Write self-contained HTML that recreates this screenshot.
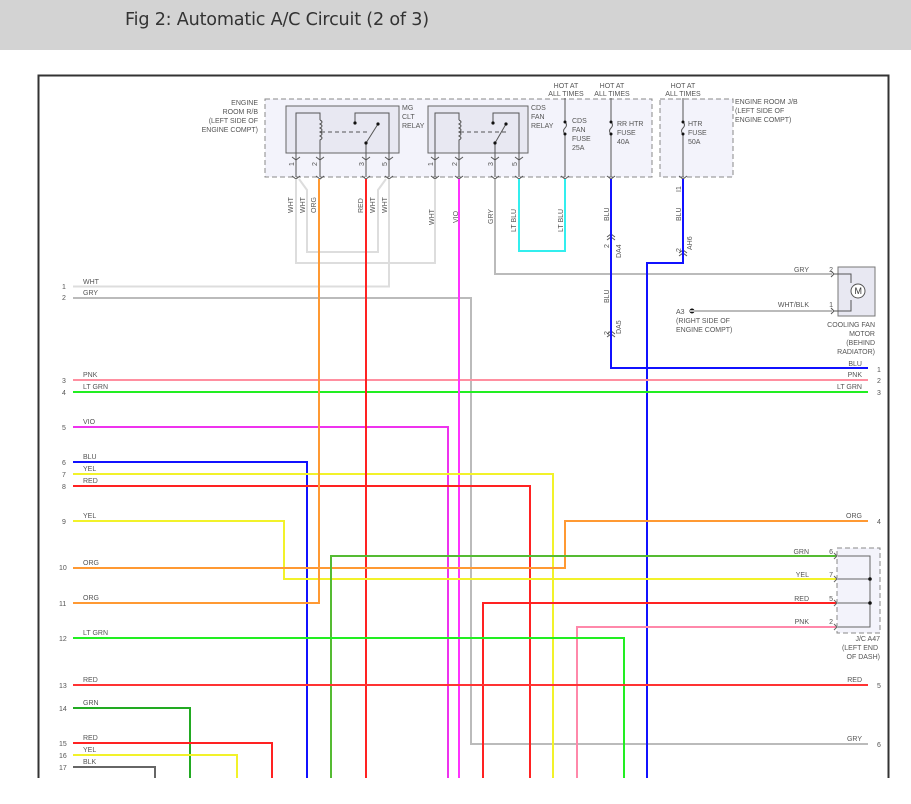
<!DOCTYPE html>
<html><head><meta charset="utf-8"><style>
html,body{margin:0;padding:0;background:#fff;width:911px;height:804px;overflow:hidden}
.hd{position:absolute;left:0;top:0;width:911px;height:50px;background:#d3d3d3}
.hd span{position:absolute;left:125px;top:10px;font:17.6px "DejaVu Sans","Liberation Sans",sans-serif;color:#333;letter-spacing:-0.2px}
svg{position:absolute;left:0;top:0}
text{font-family:"Liberation Sans",sans-serif;font-size:7px;fill:#555}
.w{fill:none;stroke-width:2}
</style></head><body>
<div class="hd"><span>Fig 2: Automatic A/C Circuit (2 of 3)</span></div>
<svg width="911" height="804" viewBox="0 0 911 804">
<path d="M38.5 778 V75.5 H888.5 V778" fill="none" stroke="#333" stroke-width="2"/>
<rect x="265" y="99" width="387" height="78" fill="#f3f3fb" stroke="#888" stroke-dasharray="5 3"/>
<rect x="660" y="99" width="73" height="78" fill="#f3f3fb" stroke="#888" stroke-dasharray="5 3"/>
<rect x="286" y="106" width="113" height="47" fill="#e8e8f2" stroke="#666"/>
<rect x="428" y="106" width="100" height="47" fill="#e8e8f2" stroke="#666"/>
<g fill="none" stroke="#555" stroke-width="1">
<path d="M296 153 V113 H320 V120"/>
<path d="M320 120 q4 2 0 4 q4 2 0 4 q4 2 0 4 q4 2 0 4 q4 2 0 4 V153"/>
<path d="M321 132 H370" stroke-dasharray="4 3"/>
<path d="M366 153 V143 L378 124"/>
<path d="M355 123 V113 H389 V153"/>
<path d="M435 153 V113 H459 V120"/>
<path d="M459 120 q4 2 0 4 q4 2 0 4 q4 2 0 4 q4 2 0 4 q4 2 0 4 V153"/>
<path d="M460 132 H508" stroke-dasharray="4 3"/>
<path d="M495 153 V143 L506 124"/>
<path d="M493 123 V113 H519 V153"/>
<path d="M565 98 V122 q3 3 0 6 q-3 3 0 6 V177"/>
<path d="M611 98 V122 q3 3 0 6 q-3 3 0 6 V177"/>
<path d="M683 98 V122 q3 3 0 6 q-3 3 0 6 V177"/>
<path d="M296 153 V177 M320 153 V177 M366 153 V177 M389 153 V177 M435 153 V177 M459 153 V177 M495 153 V177 M519 153 V177"/>
<path d="M292 157 l4 3 l4 -3 M316 157 l4 3 l4 -3 M362 157 l4 3 l4 -3 M385 157 l4 3 l4 -3 M431 157 l4 3 l4 -3 M455 157 l4 3 l4 -3 M491 157 l4 3 l4 -3 M515 157 l4 3 l4 -3"/>
<path d="M292 176 l4 3 l4 -3 M316 176 l4 3 l4 -3 M362 176 l4 3 l4 -3 M385 176 l4 3 l4 -3 M431 176 l4 3 l4 -3 M455 176 l4 3 l4 -3 M491 176 l4 3 l4 -3 M515 176 l4 3 l4 -3 M561 176 l4 3 l4 -3 M607 176 l4 3 l4 -3 M679 176 l4 3 l4 -3"/>
<path d="M607 237 l4 -3 l4 3 M607 240 l4 -3 l4 3 M679 253 l4 -3 l4 3 M679 256 l4 -3 l4 3 M607 334 l4 -3 l4 3 M607 337 l4 -3 l4 3"/>
</g>
<g fill="#111"><circle cx="355" cy="123" r="1.6"/><circle cx="378" cy="124" r="1.6"/><circle cx="366" cy="143" r="1.6"/>
<circle cx="493" cy="123" r="1.6"/><circle cx="506" cy="124" r="1.6"/><circle cx="495" cy="143" r="1.6"/>
<circle cx="565" cy="122" r="1.5"/><circle cx="565" cy="134" r="1.5"/><circle cx="611" cy="122" r="1.5"/><circle cx="611" cy="134" r="1.5"/><circle cx="683" cy="122" r="1.5"/><circle cx="683" cy="134" r="1.5"/>
<circle cx="692" cy="311" r="2.5"/></g>

<g class="w">
<path d="M296 179 V263 H435 V179" stroke="#ddd"/>
<path d="M299 179 L307 190 V252 H378 V190 L386 179" stroke="#ddd"/>
<path d="M73 286.5 H389 V179" stroke="#ddd"/>
<path d="M73 298 H471 V744 H868" stroke="#bbb"/>
<path d="M495 179 V274 H832" stroke="#bbb"/>
<path d="M690 311 H832" stroke="#bbb"/>
<path d="M519 179 V251 H565 V179" stroke="#3ee"/>
<path d="M611 179 V368 H868" stroke="#11f"/>
<path d="M683 179 V263 H647 V778" stroke="#11f"/>
<path d="M73 380 H868" stroke="#ff8fa0"/>
<path d="M73 392 H868" stroke="#2e2"/>
<path d="M73 427 H448 V778" stroke="#e3e"/>
<path d="M459 179 V778" stroke="#f3f"/>
<path d="M73 462 H307 V778" stroke="#11f"/>
<path d="M73 474 H553 V778" stroke="#f2f22a"/>
<path d="M73 486 H530 V778" stroke="#f22"/>
<path d="M366 179 V778" stroke="#f22"/>
<path d="M73 521 H284 V579 H868" stroke="#f2f22a"/>
<path d="M73 568 H565 V521 H868" stroke="#f93"/>
<path d="M73 603 H319 V179" stroke="#f93"/>
<path d="M868 556 H331 V778" stroke="#5b3"/>
<path d="M868 603 H483 V778" stroke="#f22"/>
<path d="M868 627 H577 V778" stroke="#f8a"/>
<path d="M73 638 H624 V778" stroke="#2e2"/>
<path d="M73 685 H868" stroke="#f33"/>
<path d="M73 708 H190 V778" stroke="#2a2"/>
<path d="M73 743 H272 V778" stroke="#f22"/>
<path d="M73 755 H237 V778" stroke="#f2f22a"/>
<path d="M73 767 H155 V778" stroke="#666"/>
</g>

<rect x="838" y="267" width="37" height="49" fill="#e8e8f2" stroke="#777"/>
<g fill="none" stroke="#555"><path d="M834 274 H851 V283 M834 311 H851 V300"/><circle cx="858" cy="291" r="7" fill="#fff"/><path d="M831 271 l3 3 l-3 3 M831 308 l3 3 l-3 3"/></g>
<text x="854.5" y="294" style="font-size:9px;fill:#333">M</text>
<rect x="837" y="548" width="43" height="85" fill="#f3f3fb" stroke="#888" stroke-dasharray="5 3"/>
<g fill="none" stroke="#666"><path d="M838 556 H870 V627 H838 M838 579 H870 M838 603 H870"/><path d="M834 553 l3 3 l-3 3 M834 576 l3 3 l-3 3 M834 600 l3 3 l-3 3 M834 624 l3 3 l-3 3"/></g>
<circle cx="870" cy="579" r="1.8" fill="#111"/><circle cx="870" cy="603" r="1.8" fill="#111"/>

<g>
<text x="62" y="289">1</text><text x="62" y="300">2</text><text x="62" y="383">3</text><text x="62" y="395">4</text><text x="62" y="430">5</text><text x="62" y="465">6</text><text x="62" y="477">7</text><text x="62" y="489">8</text><text x="62" y="524">9</text><text x="59" y="570">10</text><text x="59" y="606">11</text><text x="59" y="641">12</text><text x="59" y="688">13</text><text x="59" y="711">14</text><text x="59" y="746">15</text><text x="59" y="758">16</text><text x="59" y="770">17</text>
<text x="83" y="284">WHT</text><text x="83" y="295">GRY</text><text x="83" y="377">PNK</text><text x="83" y="389">LT GRN</text><text x="83" y="424">VIO</text><text x="83" y="459">BLU</text><text x="83" y="471">YEL</text><text x="83" y="483">RED</text><text x="83" y="518">YEL</text><text x="83" y="565">ORG</text><text x="83" y="600">ORG</text><text x="83" y="635">LT GRN</text><text x="83" y="682">RED</text><text x="83" y="705">GRN</text><text x="83" y="740">RED</text><text x="83" y="752">YEL</text><text x="83" y="764">BLK</text>
</g>
<g text-anchor="end">
<text x="809" y="272">GRY</text><text x="809" y="307">WHT/BLK</text>
<text x="862" y="366">BLU</text><text x="862" y="377">PNK</text><text x="862" y="389">LT GRN</text>
<text x="862" y="518">ORG</text><text x="809" y="554">GRN</text><text x="809" y="577">YEL</text><text x="809" y="601">RED</text><text x="809" y="624">PNK</text>
<text x="862" y="682">RED</text><text x="862" y="741">GRY</text>
<text x="833" y="272">2</text><text x="833" y="307">1</text><text x="833" y="554">6</text><text x="833" y="577">7</text><text x="833" y="601">5</text><text x="833" y="624">2</text>
</g>
<text x="877" y="372">1</text><text x="877" y="383">2</text><text x="877" y="395">3</text><text x="877" y="524">4</text><text x="877" y="688">5</text><text x="877" y="747">6</text>

<g text-anchor="end"><text x="258" y="105">ENGINE</text><text x="258" y="114">ROOM R/B</text><text x="258" y="123">(LEFT SIDE OF</text><text x="258" y="132">ENGINE COMPT)</text>
<text x="875" y="327">COOLING FAN</text><text x="875" y="336">MOTOR</text><text x="875" y="345">(BEHIND</text><text x="875" y="354">RADIATOR)</text>
<text x="880" y="641">J/C A47</text><text x="878" y="650">(LEFT END</text><text x="880" y="659">OF DASH)</text></g>
<text x="402" y="110">MG</text><text x="402" y="119">CLT</text><text x="402" y="128">RELAY</text>
<text x="531" y="110">CDS</text><text x="531" y="119">FAN</text><text x="531" y="128">RELAY</text>
<text x="572" y="123">CDS</text><text x="572" y="132">FAN</text><text x="572" y="141">FUSE</text><text x="572" y="150">25A</text>
<text x="617" y="126">RR HTR</text><text x="617" y="135">FUSE</text><text x="617" y="144">40A</text>
<text x="688" y="126">HTR</text><text x="688" y="135">FUSE</text><text x="688" y="144">50A</text>
<g text-anchor="middle"><text x="566" y="88">HOT AT</text><text x="566" y="96">ALL TIMES</text><text x="612" y="88">HOT AT</text><text x="612" y="96">ALL TIMES</text><text x="683" y="88">HOT AT</text><text x="683" y="96">ALL TIMES</text></g>
<text x="735" y="104">ENGINE ROOM J/B</text><text x="735" y="113">(LEFT SIDE OF</text><text x="735" y="122">ENGINE COMPT)</text>
<text x="676" y="314">A3</text><text x="676" y="323">(RIGHT SIDE OF</text><text x="676" y="332">ENGINE COMPT)</text>

<g>
<text transform="translate(294,166) rotate(-90)">1</text><text transform="translate(317,166) rotate(-90)">2</text><text transform="translate(364,166) rotate(-90)">3</text><text transform="translate(387,166) rotate(-90)">5</text>
<text transform="translate(433,166) rotate(-90)">1</text><text transform="translate(457,166) rotate(-90)">2</text><text transform="translate(493,166) rotate(-90)">3</text><text transform="translate(517,166) rotate(-90)">5</text>
<text transform="translate(293,213) rotate(-90)">WHT</text><text transform="translate(305,213) rotate(-90)">WHT</text><text transform="translate(316,213) rotate(-90)">ORG</text>
<text transform="translate(363,213) rotate(-90)">RED</text><text transform="translate(375,213) rotate(-90)">WHT</text><text transform="translate(387,213) rotate(-90)">WHT</text>
<text transform="translate(434,225) rotate(-90)">WHT</text><text transform="translate(458,223) rotate(-90)">VIO</text><text transform="translate(493,224) rotate(-90)">GRY</text>
<text transform="translate(516,232) rotate(-90)">LT BLU</text><text transform="translate(563,232) rotate(-90)">LT BLU</text>
<text transform="translate(609,221) rotate(-90)">BLU</text><text transform="translate(609,303) rotate(-90)">BLU</text><text transform="translate(681,221) rotate(-90)">BLU</text>
<text transform="translate(609,248) rotate(-90)">2</text><text transform="translate(621,258) rotate(-90)">DA4</text>
<text transform="translate(609,335) rotate(-90)">2</text><text transform="translate(621,334) rotate(-90)">DA5</text>
<text transform="translate(681,252) rotate(-90)">2</text><text transform="translate(692,250) rotate(-90)">AH6</text>
<text transform="translate(681,192) rotate(-90)">I1</text>
</g>
</svg>
</body></html>
